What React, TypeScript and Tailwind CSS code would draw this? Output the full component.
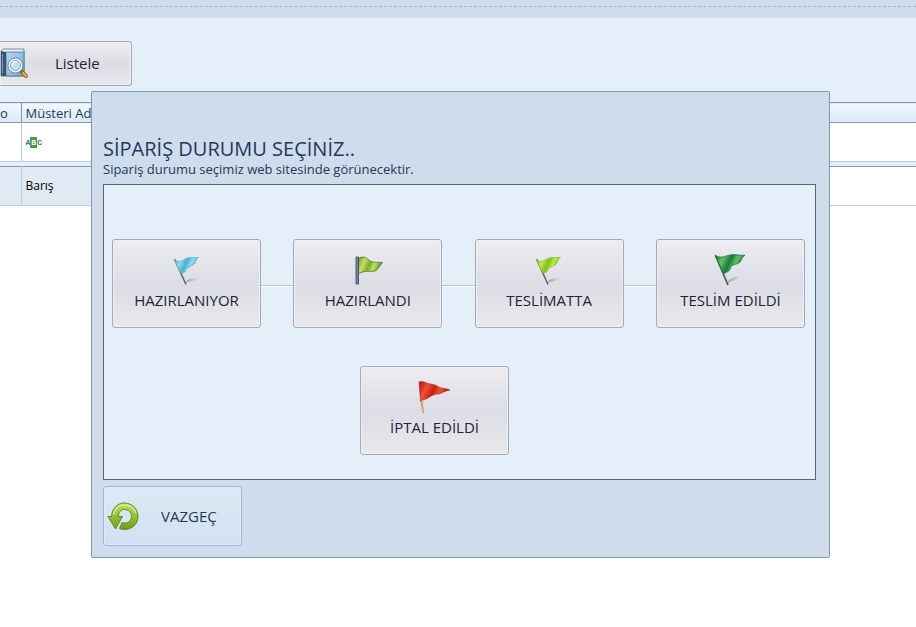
import type { ReactNode } from 'react'
import { clsx } from 'clsx'

type FlagKind = 'blue' | 'olive' | 'lime' | 'green' | 'red'

const steps: { label: string; flag: FlagKind }[] = [
  { label: 'HAZIRLANIYOR', flag: 'blue' },
  { label: 'HAZIRLANDI', flag: 'olive' },
  { label: 'TESLİMATTA', flag: 'lime' },
  { label: 'TESLİM EDİLDİ', flag: 'green' },
]

const flagColors: Record<FlagKind, [string, string, string]> = {
  blue: ['#3fa3c4', '#8fdcf0', '#4cb0cf'],
  olive: ['#5f8f1c', '#c3e062', '#7cac2c'],
  lime: ['#6fae1c', '#b9ec4e', '#7fbe22'],
  green: ['#14692a', '#5fc06a', '#1b7a33'],
  red: ['#a8120c', '#ee5238', '#c81f12'],
}

function FlagIcon({ kind }: { kind: FlagKind }) {
  const [dark, light, mid] = flagColors[kind]
  const fill = `url(#flag-${kind})`

  return (
    <svg width="32" height="32" viewBox="1 0 32 32" overflow="visible" aria-hidden="true">
      <defs>
        <linearGradient id={`flag-${kind}`} x1="0" y1="0" x2="1" y2="0.3">
          <stop offset="0" stopColor={dark} />
          <stop offset="0.3" stopColor={light} />
          <stop offset="0.55" stopColor={mid} />
          <stop offset="0.75" stopColor={light} />
          <stop offset="1" stopColor={dark} />
        </linearGradient>
        <linearGradient id={`shade-${kind}`} x1="0" y1="0" x2="1" y2="0">
          <stop offset="0" stopColor="#8d9098" stopOpacity="0.7" />
          <stop offset="1" stopColor="#8d9098" stopOpacity="0" />
        </linearGradient>
      </defs>

      {(kind === 'blue' || kind === 'lime') && (
        <>
          <path d="M16 28C17 25 20 24 29 24C27 27 22 26 16 29Z" fill={`url(#shade-${kind})`} />
          <path d="M4.500 5L16 30.500" stroke="#5d6266" strokeWidth="1.500" />
          <path d="M4 5C8 9 12 7 15 5C19 2.500 23 4 28.500 3.500C25 5 26.500 9 23 11C19 13 16 14 15.500 17C14.500 19 12 19 10.500 19Z" fill={fill} stroke={mid} strokeWidth="0.600" />
        </>
      )}
      {kind === 'green' && (
        <>
          <path d="M15 28C16 25 19 23 28 22C26 26 20 26 15 29Z" fill="url(#shade-green)" />
          <path d="M2.500 1.500L15 31" stroke="#565c5e" strokeWidth="1.800" />
          <path d="M2 1C7 5 12 2 17 1C22 -0.500 26 2 32 1C28 4 29 8 25 9.500C21 11 18 11 17.500 14C17 17 14 18.500 10.500 19.500Z" fill={fill} stroke="#19682c" strokeWidth="0.600" />
        </>
      )}
      {kind === 'olive' && (
        <>
          <path d="M7 5C12 1 16 4 19 7C23 9 27 8 31.500 8.500C29 11 28 15 24 17C19 18 14 16 7 20Z" fill={fill} stroke="#537a1d" strokeWidth="0.800" />
          <path d="M5 3H7.500V30H5Z" fill="#6f86a0" stroke="#39465a" strokeWidth="0.800" />
        </>
      )}
      {kind === 'red' && (
        <>
          <path d="M2.500 20L4.500 20L6 32H4.500Z" fill="#d79a62" />
          <path d="M1 1C4 -0.500 7 1 10 2.500C14 3.500 16 3 19 5C23 8 27 6.500 32 9C26 10 25 12 21 13C16 13 13 15 10 17C7 19 5 18 2.500 20.500Z" fill={fill} stroke="#a9170e" strokeWidth="0.500" />
        </>
      )}
    </svg>
  )
}

function BookSearchIcon() {
  return (
    <svg width="29" height="31" viewBox="0 0 29 31" aria-hidden="true">
      <defs>
        <linearGradient id="cover" x1="0" y1="0" x2="1" y2="1">
          <stop offset="0" stopColor="#b4daf0" />
          <stop offset="1" stopColor="#6fa8d0" />
        </linearGradient>
      </defs>
      <path d="M1 3L3 1H24V27L22 28H1Z" fill="#e9f1f7" stroke="#56738d" strokeWidth="0.800" />
      <path d="M6 4H24V28H6Z" fill="url(#cover)" stroke="#4a7396" strokeWidth="0.800" />
      <path d="M1 3L6 4V28H1Z" fill="#3c5573" />
      <path d="M2.500 6V25" stroke="#7d93ad" />
      <path d="M21 23L26 28" stroke="#98621f" strokeWidth="4" strokeLinecap="round" />
      <path d="M23 25L26 28" stroke="#f0b45e" strokeWidth="2" strokeLinecap="round" />
      <circle cx="15.500" cy="17.500" r="6.500" fill="#d3eafa" stroke="#eef5fb" strokeWidth="2" />
      <circle cx="15.500" cy="17.500" r="5" fill="#c3dff4" stroke="#6f8fb2" strokeWidth="0.800" />
      <circle cx="15.500" cy="17.500" r="7.500" fill="none" stroke="#56779c" strokeWidth="0.800" />
      <path d="M12 17C12 14 15 13 17 14" stroke="#fff" strokeWidth="1.500" fill="none" />
    </svg>
  )
}

function UndoIcon() {
  return (
    <svg width="32" height="30" viewBox="1 -1 32 30" overflow="visible" aria-hidden="true">
      <defs>
        <linearGradient id="undo" x1="0" y1="0" x2="0" y2="1">
          <stop offset="0" stopColor="#c2dd66" />
          <stop offset="0.5" stopColor="#94c038" />
          <stop offset="1" stopColor="#6c9e1d" />
        </linearGradient>
      </defs>
      <path
        d="M1 14.500H4.500C5 6.500 10.500 1 17.500 1C25 1 31 7 31 14.500C31 22 25 27.500 17.500 27.500C15.500 27.500 14 27.200 12.500 26.500L15 20.500C20.500 22.500 24.500 19 24.500 14.500C24.500 10.500 21.500 7.500 17.500 7.500C13.500 7.500 11.500 10.500 11.200 14.500H15.500L8.500 27Z"
        fill="url(#undo)"
        stroke="#5f8d1c"
        strokeLinejoin="round"
      />
      <path d="M6.500 13C7 7 11.500 3 17.500 3C23 3 27.500 6.500 28.800 11" fill="none" stroke="#e3f1a8" strokeWidth="1.500" opacity="0.8" />
    </svg>
  )
}

function TileButton({ flag, children }: { flag: FlagKind; children: ReactNode }) {
  return (
    <button
      type="button"
      className="flex h-[89px] w-[149px] shrink-0 flex-col items-center gap-1 rounded-[3px] border border-[#a4a9b5] bg-linear-to-b from-[#ededf1] via-[#dcdde5] to-[#e8e8ec] pt-3.5 text-[15px] leading-5 text-[#1e2439] shadow-[inset_0_0_0_1px_#f0f1f5]"
    >
      <FlagIcon kind={flag} />
      <span className="whitespace-nowrap">{children}</span>
    </button>
  )
}

function OrderGrid() {
  return (
    <table className="w-full table-fixed border-collapse text-left text-xs text-[#1e395b]">
      <thead>
        <tr className="h-5 border-y border-[#8297b3] bg-linear-to-b from-[#f1f7fe] to-[#dde9f6] text-[13px] leading-4">
          <th scope="col" className="w-[21px] border-r border-[#8297b3] font-normal">o</th>
          <th scope="col" className="w-[500px] pl-1 font-normal">Müsteri Adı</th>
          <th scope="col" aria-label="Durum" />
        </tr>
      </thead>
      <tbody>
        <tr className="h-[39px] border-b border-[#bccfe0] bg-white">
          <td className="border-r border-[#bccfe0]" />
          <td className="pl-1">
            <span className="flex items-center font-['Liberation_Mono',monospace] text-[8px] leading-[11px] font-bold text-[#4f6d72]">
              A<span className="bg-[#43a047] px-px text-white">B</span>C
            </span>
          </td>
          <td />
        </tr>
        <tr className="h-[5px] border-b border-[#8297b3] bg-[#e4effa]">
          <td colSpan={3} />
        </tr>
        <tr className="h-[39px] border-b border-[#bccfe0] bg-white">
          <td className="border-r border-[#bccfe0] bg-[#e0eaf5]" />
          <td className="bg-[#e0eaf5] pl-1 text-black">Barış</td>
          <td />
        </tr>
      </tbody>
    </table>
  )
}

function StatusDialog() {
  return (
    <div
      role="dialog"
      aria-labelledby="status-title"
      className="absolute top-[91px] right-[86px] left-[91px] rounded-[2px] border border-[#8297b3] bg-[#cfdcec] pt-[45px] pr-[13px] pb-[11px] pl-[11px] text-[#1e395b]"
    >
      <h1 id="status-title" className="text-xl leading-6">SİPARİŞ DURUMU SEÇİNİZ..</h1>
      <p className="text-[13px] leading-4">Sipariş durumu seçimiz web sitesinde görünecektir.</p>

      <div className="mt-[7px] h-[296px] border border-[#5b6575] bg-[#e4effa] pt-[54px] pr-2.5 pl-2">
        <div className="flex items-center">
          {steps.map((step, i) => (
            <div key={step.label} className={clsx('flex items-center', i > 0 && 'flex-1')}>
              {i > 0 && <div className="mt-1 h-0.5 flex-1 border-t border-[#bcbfc4] bg-white" />}
              <TileButton flag={step.flag}>{step.label}</TileButton>
            </div>
          ))}
        </div>
        <div className="mt-[38px] flex justify-center pr-12">
          <TileButton flag="red">İPTAL EDİLDİ</TileButton>
        </div>
      </div>

      <button
        type="button"
        className="mt-1.5 flex h-[60px] w-[139px] items-center rounded-[3px] border border-[#a3b4d0] bg-linear-to-b from-[#dce9f6] to-[#d2e1f1] pl-1 text-[15px] shadow-[inset_0_0_0_1px_#dfeaf6]"
      >
        <UndoIcon />
        <span className="ml-[21px]">VAZGEÇ</span>
      </button>
    </div>
  )
}

export default function App() {
  return (
    <div className="relative min-h-screen bg-white font-['Open_Sans',sans-serif]">
      <div className="h-[18px] bg-[#cfdcec] pt-1.5">
        <div className="border-t border-dashed border-[#a3b5cf]" />
      </div>
      <div className="h-[84px] bg-[#e4effa] pt-[23px]">
        <button
          type="button"
          className="flex h-[45px] w-[132px] items-center rounded-r-[3px] border border-l-0 border-[#a4a9b5] bg-linear-to-b from-[#ededf1] via-[#dcdde5] to-[#e8e8ec] text-[15px] text-[#1e2439] shadow-[inset_0_0_0_1px_#f0f1f5]"
        >
          <BookSearchIcon />
          <span className="ml-[26px]">Listele</span>
        </button>
      </div>
      <OrderGrid />
      <StatusDialog />
    </div>
  )
}
